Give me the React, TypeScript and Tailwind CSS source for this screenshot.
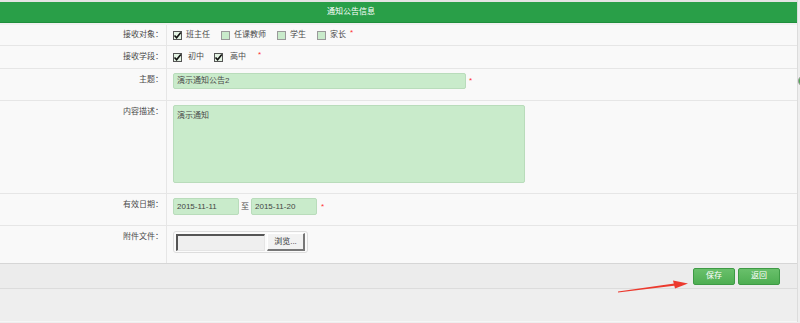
import React from 'react'

const font = { fontFamily: '"Liberation Sans", "Noto Sans CJK SC", sans-serif' }

function Box({ checked }: { checked?: boolean }) {
    return (
        <span
            className={
                'relative inline-block w-[9px] h-[9px] border ' +
                (checked ? 'border-[#555] bg-[#e3f3e3]' : 'border-[#9a9a9a] bg-[#c9ebcb]')
            }
        >
            {checked && (
                <svg viewBox="0 0 9 9" className="absolute left-[-1px] top-[-1px] w-[9px] h-[9px]">
                    <path d="M1.5 4.5 L3.6 6.8 L7.8 1.6" fill="none" stroke="#111" strokeWidth="1.6" />
                </svg>
            )}
        </span>
    )
}

function Check({ label, checked, mr }: { label: string; checked?: boolean; mr: string }) {
    return (
        <span className={'flex items-center ' + mr}>
            <Box checked={checked} />
            <span className="ml-[4px]">{label}</span>
        </span>
    )
}

const Star = ({ className }: { className?: string }) => (
    <span className={'text-[#ff3030] text-[8px] leading-none ' + (className ?? '')}>*</span>
)

function Row({
    label,
    h,
    center,
    children,
}: {
    label: string
    h: string
    center?: boolean
    children: React.ReactNode
}) {
    return (
        <div className={'flex border-b border-[#e6e6e6] ' + h}>
            <div
                className={
                    'w-[167px] shrink-0 border-r border-[#e6e6e6] pr-[3px] text-right leading-[12px] ' +
                    (center ? 'flex items-center justify-end' : 'pt-[5px]')
                }
            >
                {label}
            </div>
            <div className={'flex-1 pl-[6px] ' + (center ? 'flex items-center' : 'pt-[4px]')}>{children}</div>
        </div>
    )
}

export default function App() {
    return (
        <div className="relative w-[800px] h-[323px] overflow-hidden bg-[#eeeeee] text-[8px] text-[#4a4a4a]" style={font}>
            <div className="w-[798px] border-r border-[#dcdcdc] bg-[#eeeeee]">
                <div className="h-[2px] bg-[#e4e4e4]" />
                <div className="h-[21px] bg-[#299f48] border-b border-[#1f8f3c] flex items-center pl-[327px] text-white">
                    通知公告信息
                </div>
                <div className="h-[2px] bg-[#f1f1f1]" />

                <div className="bg-[#f9f9f9]">
                    <Row label="接收对象：" h="h-[21px]" center>
                        <Check label="班主任" checked mr="mr-[11px]" />
                        <Check label="任课教师" mr="mr-[11px]" />
                        <Check label="学生" mr="mr-[11px]" />
                        <Check label="家长" mr="mr-[4px]" />
                        <Star className="-mt-[4px]" />
                    </Row>
                    <Row label="接收学段：" h="h-[23px]" center>
                        <span className="flex items-center mr-[10px]">
                            <Box checked />
                            <span className="ml-[6px]">初中</span>
                        </span>
                        <span className="flex items-center mr-[12px]">
                            <Box checked />
                            <span className="ml-[7px]">高中</span>
                        </span>
                        <Star className="-mt-[4px]" />
                    </Row>
                    <Row label="主题：" h="h-[32px]">
                        <div className="flex items-center">
                            <div className="w-[293px] h-[16px] bg-[#c9ebcb] border border-[#b9dcbb] rounded-[2px] pl-[3px] flex items-center">
                                演示通知公告2
                            </div>
                            <Star className="ml-[3px]" />
                        </div>
                    </Row>
                    <Row label="内容描述：" h="h-[93px]">
                        <div className="w-[352px] h-[78px] bg-[#c9ebcb] border border-[#b9dcbb] rounded-[2px] pl-[3px] pt-[4px]">
                            演示通知
                        </div>
                    </Row>
                    <Row label="有效日期：" h="h-[32px]">
                        <div className="flex items-center">
                            <div className="w-[66px] h-[17px] bg-[#c9ebcb] border border-[#b9dcbb] rounded-[2px] pl-[3px] flex items-center text-[#444]">
                                2015-11-11
                            </div>
                            <span className="mx-[2px]">至</span>
                            <div className="w-[66px] h-[17px] bg-[#c9ebcb] border border-[#b9dcbb] rounded-[2px] pl-[3px] flex items-center text-[#444]">
                                2015-11-20
                            </div>
                            <Star className="ml-[4px]" />
                        </div>
                    </Row>
                    <div className="flex h-[37px]">
                        <div className="w-[167px] shrink-0 border-r border-[#e6e6e6] pr-[3px] text-right leading-[12px] pt-[5px]">
                            附件文件：
                        </div>
                        <div className="flex-1 pl-[6px] pt-[5px]">
                            <div className="w-[135px] h-[22px] bg-[#fbfbfb] border border-[#dddddd] rounded-[3px] flex items-center pl-[2px] gap-[2px]">
                                <div className="w-[89px] h-[17px] bg-[#efefef] border-t-2 border-l-2 border-[#555] border-b border-r border-b-[#e5e5e5] border-r-[#e5e5e5]" />
                                <div className="w-[38px] h-[18px] bg-[#f2f2f2] border-b-2 border-r-2 border-[#777] border-t border-l border-t-[#fff] border-l-[#fff] flex items-center justify-center text-[#333]">
                                    浏览...
                                </div>
                            </div>
                        </div>
                    </div>
                </div>

                <div className="h-[26px] bg-[#ececec] border-t border-[#d6d6d6] border-b border-b-[#dcdcdc] flex items-center justify-end pr-[17px] gap-[3px]">
                    <div className="w-[42px] h-[17px] rounded-[2px] border border-[#3e9a45] bg-gradient-to-b from-[#69c06b] to-[#4eae52] text-white flex items-center justify-center">
                        保存
                    </div>
                    <div className="w-[42px] h-[17px] rounded-[2px] border border-[#3e9a45] bg-gradient-to-b from-[#69c06b] to-[#4eae52] text-white flex items-center justify-center">
                        返回
                    </div>
                </div>
                <div className="h-[33px] bg-[#eeeeee] border-b border-[#f6f6f6]" />
            </div>

            <div className="absolute right-[-10px] top-[75px] w-[12px] h-[12px] rounded-full bg-[#4caf50] border border-[#999]" />

            <svg className="absolute left-0 top-0 pointer-events-none" width="800" height="323">
                <polygon points="618,291.5 618,292.5 676,285.6 676,283.2" fill="#ec3a2e" />
                <polygon points="673,280.5 688,283.6 675,288.5" fill="#ec3a2e" />
            </svg>
        </div>
    )
}
